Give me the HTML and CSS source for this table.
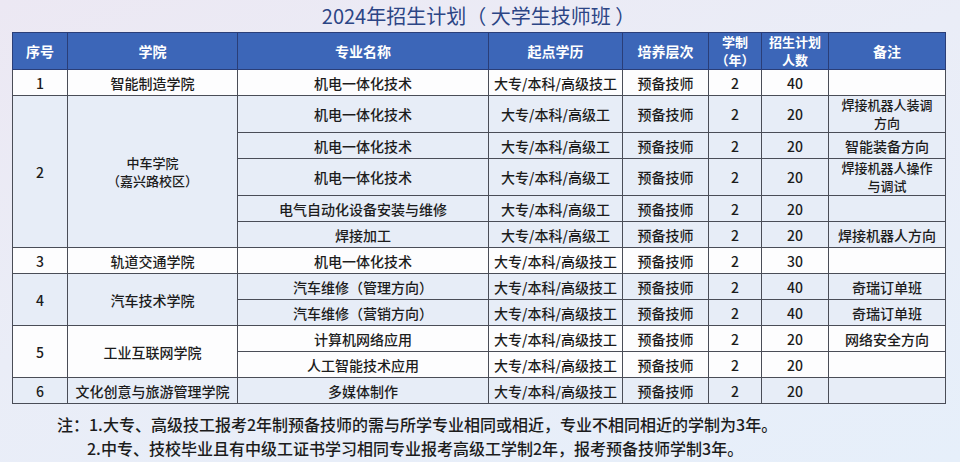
FILE: index.html
```html
<!DOCTYPE html>
<html lang="zh">
<head>
<meta charset="utf-8">
<title>2024年招生计划</title>
<link rel="stylesheet" href="styles.css">
</head>
<body>
<div class="page">
  <h1 class="title">2024年招生计划（ 大学生技师班 ）</h1>
  <table class="plan">
    <colgroup>
      <col style="width:55px"><col style="width:170px"><col style="width:251px"><col style="width:134px">
      <col style="width:86px"><col style="width:53px"><col style="width:67px"><col style="width:117px">
    </colgroup>
    <thead>
      <tr>
        <th>序号</th><th>学院</th><th>专业名称</th><th>起点学历</th><th>培养层次</th>
        <th class="two">学制<br>（年）</th><th class="two">招生计划<br>人数</th><th>备注</th>
      </tr>
    </thead>
    <tbody>
      <tr class="w r26">
        <td>1</td><td>智能制造学院</td><td>机电一体化技术</td><td>大专/本科/高级技工</td><td>预备技师</td><td>2</td><td>40</td><td></td>
      </tr>
      <tr class="b r36">
        <td rowspan="5">2</td><td rowspan="5" class="two">中车学院<br>（嘉兴路校区）</td><td>机电一体化技术</td><td>大专/本科/高级工</td><td>预备技师</td><td>2</td><td>20</td><td class="two">焊接机器人装调<br>方向</td>
      </tr>
      <tr class="b r26">
        <td>机电一体化技术</td><td>大专/本科/高级工</td><td>预备技师</td><td>2</td><td>20</td><td>智能装备方向</td>
      </tr>
      <tr class="b r36">
        <td>机电一体化技术</td><td>大专/本科/高级工</td><td>预备技师</td><td>2</td><td>20</td><td class="two">焊接机器人操作<br>与调试</td>
      </tr>
      <tr class="b r26">
        <td>电气自动化设备安装与维修</td><td>大专/本科/高级工</td><td>预备技师</td><td>2</td><td>20</td><td></td>
      </tr>
      <tr class="b r26">
        <td>焊接加工</td><td>大专/本科/高级工</td><td>预备技师</td><td>2</td><td>20</td><td>焊接机器人方向</td>
      </tr>
      <tr class="w r26">
        <td>3</td><td>轨道交通学院</td><td>机电一体化技术</td><td>大专/本科/高级技工</td><td>预备技师</td><td>2</td><td>30</td><td></td>
      </tr>
      <tr class="b r26">
        <td rowspan="2">4</td><td rowspan="2">汽车技术学院</td><td>汽车维修（管理方向）</td><td>大专/本科/高级技工</td><td>预备技师</td><td>2</td><td>40</td><td>奇瑞订单班</td>
      </tr>
      <tr class="b r26">
        <td>汽车维修（营销方向）</td><td>大专/本科/高级技工</td><td>预备技师</td><td>2</td><td>40</td><td>奇瑞订单班</td>
      </tr>
      <tr class="w r26">
        <td rowspan="2">5</td><td rowspan="2">工业互联网学院</td><td>计算机网络应用</td><td>大专/本科/高级技工</td><td>预备技师</td><td>2</td><td>20</td><td>网络安全方向</td>
      </tr>
      <tr class="w r26">
        <td>人工智能技术应用</td><td>大专/本科/高级技工</td><td>预备技师</td><td>2</td><td>20</td><td></td>
      </tr>
      <tr class="b r26">
        <td>6</td><td>文化创意与旅游管理学院</td><td>多媒体制作</td><td>大专/本科/高级技工</td><td>预备技师</td><td>2</td><td>20</td><td></td>
      </tr>
    </tbody>
  </table>
  <div class="notes">
    <p class="n1">注：1.大专、高级技工报考2年制预备技师的需与所学专业相同或相近，专业不相同相近的学制为3年。</p>
    <p class="n2">2.中专、技校毕业且有中级工证书学习相同专业报考高级工学制2年，报考预备技师学制3年。</p>
  </div>
</div>
</body>
</html>
```

FILE: styles.css
```css
* { box-sizing: border-box; }
html, body { margin: 0; padding: 0; }
body {
  width: 960px;
  height: 462px;
  overflow: hidden;
  font-family: "Noto Sans CJK SC", "Noto Sans", sans-serif;
  background: linear-gradient(160deg, #ece8f3 0%, #eaedf7 45%, #e6effa 100%);
  color: #1c1c1c;
}
.page {
  padding: 0 15px 0 12px;
}
.title {
  margin: 0;
  height: 32px;
  line-height: 32px;
  text-align: center;
  font-size: 20px;
  font-weight: 400;
  color: #2c4585;
}
.plan {
  width: 933px;
  border-collapse: collapse;
  table-layout: fixed;
  font-size: 14px;
  font-weight: 500;
}
.plan th, .plan td {
  border: 1px solid #4a4d57;
  text-align: center;
  vertical-align: middle;
  padding: 0;
  line-height: 18px;
  white-space: nowrap;
}
.plan th {
  background: #3c66b8;
  color: #fff;
  height: 37px;
  font-weight: 700;
  font-size: 14px;
  border-color: #2a3e78;
}
.plan th.two { font-size: 13px; line-height: 18px; }
.plan tr.w td { background: #fdfdfe; }
.plan tr.b td { background: #e7edf7; }
.plan tr.r26 td { height: 26px; }
.plan tr.r36 td { height: 36px; }
.plan td.two { font-size: 13px; line-height: 18px; }
.notes {
  font-size: 16px;
  font-weight: 500;
  color: #1c1c1c;
  padding-top: 8px;
}
.notes p { margin: 0; line-height: 24px; white-space: nowrap; }
.n1 { padding-left: 45px; }
.n2 { padding-left: 75px; }
```
